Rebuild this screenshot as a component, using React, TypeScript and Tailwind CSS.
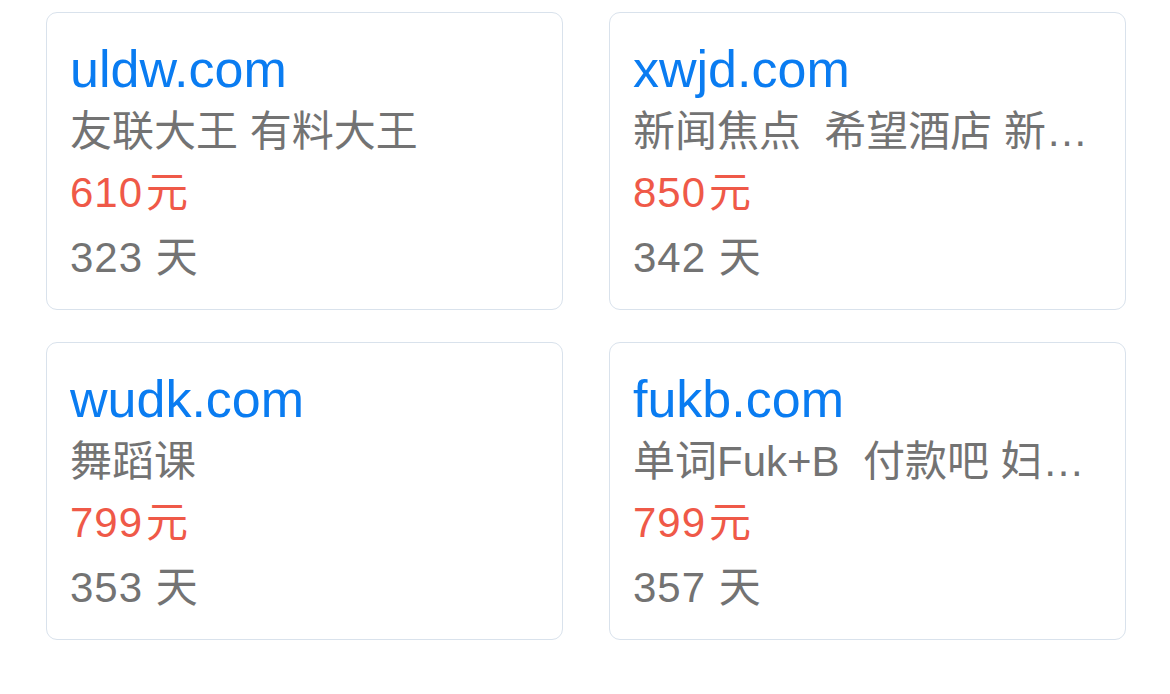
import React from "react";

type Domain = {
  name: string;
  desc: string;
  price: number;
  days: number;
};

const domains: Domain[] = [
  { name: "uldw.com", desc: "友联大王 有料大王", price: 610, days: 323 },
  { name: "xwjd.com", desc: "新闻焦点  希望酒店 新闻焦点网", price: 850, days: 342 },
  { name: "wudk.com", desc: "舞蹈课", price: 799, days: 353 },
  { name: "fukb.com", desc: "单词Fuk+B  付款吧 妇科病", price: 799, days: 357 },
];

function DomainCard({ item }: { item: Domain }) {
  return (
    <div className="h-[298px] rounded-[11px] border border-[#d9e2ec] bg-white pt-[24px] pl-[23px] pr-[24px]">
      <div className="text-[52px] leading-[64px] text-[#0a7cf1]">{item.name}</div>
      <div className="overflow-hidden text-ellipsis whitespace-pre text-[42px] leading-[61px] text-[#737373]">
        {item.desc}
      </div>
      <div className="text-[42px] leading-[61px] tracking-[1px] text-[#ef5948]">
        {item.price}
        <span className="ml-[3px]">元</span>
      </div>
      <div className="mt-1 text-[42px] leading-[61px] tracking-[1px] text-[#737373]">{item.days} 天</div>
    </div>
  );
}

export default function App() {
  return (
    <div
      className="min-h-screen bg-white pt-[12px] pl-[46px] pr-[44px]"
      style={{ fontFamily: '"Liberation Sans", "Noto Sans CJK SC", sans-serif' }}
    >
      <div className="grid grid-cols-2 gap-x-[46px] gap-y-[32px]">
        {domains.map((d) => (
          <DomainCard key={d.name} item={d} />
        ))}
      </div>
    </div>
  );
}
